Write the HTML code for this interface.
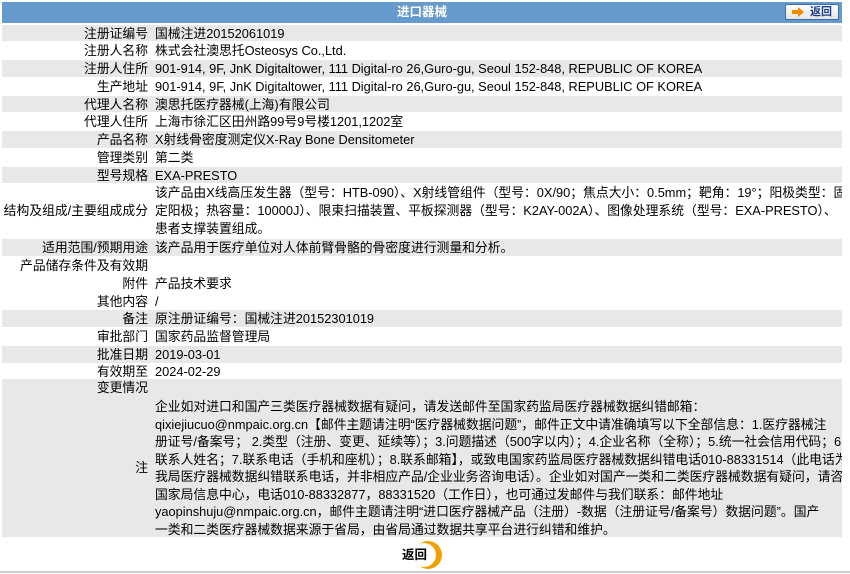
<!DOCTYPE html>
<html><head><meta charset="utf-8"><style>
body{margin:0;width:850px;height:574px;background:#fff;font-family:"Liberation Sans","Noto Sans CJK SC",sans-serif;font-size:12.8px;color:#000;position:relative;overflow:hidden}
.hd{position:absolute;left:2px;top:2px;width:840px;height:21px;background:#6699cc;color:#fff;font-weight:bold;text-align:center;line-height:21px;font-size:12.5px}
.r{position:absolute;left:2px;width:840px;border-top:1px solid #fff;box-sizing:border-box;white-space:nowrap;overflow:hidden}
.g{background:#e8e8e8}
.l{position:absolute;left:0;width:146px;text-align:right}
.v{position:absolute;left:153px}
.btn{position:absolute;left:785px;top:4px;width:54px;height:16px;border:1px solid #3a6ea5;border-radius:2px;background:linear-gradient(#fff,#e4e4e4);box-sizing:border-box;font-weight:bold;color:#1b3d8a;font-size:11px;line-height:14px}
</style></head><body>
<div class="hd">进口器械</div>
<div class="btn"><span style="position:absolute;left:6px;top:2px;width:0;height:0;"><svg width="12" height="10" viewBox="0 0 12 10"><path d="M0 3h6V0l6 5-6 5V7H0z" fill="#f08a00"/></svg></span><span style="position:absolute;left:24px;top:0">返回</span></div>
<div class="r g" style="top:23.5px;height:17.75px;line-height:17px"><span class="l">注册证编号</span><span class="v">国械注进20152061019</span></div>
<div class="r" style="top:41.25px;height:17.75px;line-height:17px"><span class="l">注册人名称</span><span class="v">株式会社澳思托Osteosys Co.,Ltd.</span></div>
<div class="r g" style="top:59px;height:17.75px;line-height:17px"><span class="l">注册人住所</span><span class="v">901-914, 9F, JnK Digitaltower, 111 Digital-ro 26,Guro-gu, Seoul 152-848, REPUBLIC OF KOREA</span></div>
<div class="r" style="top:76.75px;height:17.75px;line-height:17px"><span class="l">生产地址</span><span class="v">901-914, 9F, JnK Digitaltower, 111 Digital-ro 26,Guro-gu, Seoul 152-848, REPUBLIC OF KOREA</span></div>
<div class="r g" style="top:94.5px;height:17.75px;line-height:17px"><span class="l">代理人名称</span><span class="v">澳思托医疗器械(上海)有限公司</span></div>
<div class="r" style="top:112.25px;height:17.75px;line-height:17px"><span class="l">代理人住所</span><span class="v">上海市徐汇区田州路99号9号楼1201,1202室</span></div>
<div class="r g" style="top:130px;height:17.75px;line-height:17px"><span class="l">产品名称</span><span class="v">X射线骨密度测定仪X-Ray Bone Densitometer</span></div>
<div class="r" style="top:147.75px;height:17.75px;line-height:17px"><span class="l">管理类别</span><span class="v">第二类</span></div>
<div class="r g" style="top:165.5px;height:17.75px;line-height:17px"><span class="l">型号规格</span><span class="v">EXA-PRESTO</span></div>
<div class="r" style="top:183.25px;height:55px;line-height:18px"><span class="l" style="top:18px">结构及组成/主要组成成分</span><span class="v" style="top:0">该产品由X线高压发生器（型号：HTB-090）、X射线管组件（型号：0X/90；焦点大小：0.5mm；靶角：19°；阳极类型：固<br>定阳极；热容量：10000J）、限束扫描装置、平板探测器（型号：K2AY-002A）、图像处理系统（型号：EXA-PRESTO）、<br>患者支撑装置组成。</span></div>
<div class="r g" style="top:238.25px;height:17.75px;line-height:17px"><span class="l">适用范围/预期用途</span><span class="v">该产品用于医疗单位对人体前臂骨骼的骨密度进行测量和分析。</span></div>
<div class="r" style="top:256px;height:17.75px;line-height:17px"><span class="l">产品储存条件及有效期</span><span class="v"></span></div>
<div class="r" style="top:273.75px;height:17.75px;line-height:17px"><span class="l">附件</span><span class="v">产品技术要求</span></div>
<div class="r" style="top:291.5px;height:17.75px;line-height:17px"><span class="l">其他内容</span><span class="v">/</span></div>
<div class="r g" style="top:309.25px;height:17.75px;line-height:17px"><span class="l">备注</span><span class="v">原注册证编号：国械注进20152301019</span></div>
<div class="r" style="top:327px;height:17.75px;line-height:17px"><span class="l">审批部门</span><span class="v">国家药品监督管理局</span></div>
<div class="r g" style="top:344.75px;height:17.75px;line-height:17px"><span class="l">批准日期</span><span class="v">2019-03-01</span></div>
<div class="r" style="top:362.5px;height:16px;line-height:15px"><span class="l">有效期至</span><span class="v">2024-02-29</span></div>
<div class="r g" style="top:378px;height:159px;line-height:17.5px">
<span class="l" style="top:0">变更情况</span>
<span class="l" style="top:80px">注</span>
<span class="v" style="top:19px">企业如对进口和国产三类医疗器械数据有疑问，请发送邮件至国家药监局医疗器械数据纠错邮箱：<br>qixiejiucuo@nmpaic.org.cn【邮件主题请注明“医疗器械数据问题”，邮件正文中请准确填写以下全部信息：1.医疗器械注<br>册证号/备案号； 2.类型（注册、变更、延续等）；3.问题描述（500字以内）；4.企业名称（全称）；5.统一社会信用代码；6.<br>联系人姓名；7.联系电话（手机和座机）；8.联系邮箱】，或致电国家药监局医疗器械数据纠错电话010-88331514（此电话为<br>我局医疗器械数据纠错联系电话，并非相应产品/企业业务咨询电话）。企业如对国产一类和二类医疗器械数据有疑问，请咨询<br>国家局信息中心，电话010-88332877，88331520（工作日），也可通过发邮件与我们联系：邮件地址<br>yaopinshuju@nmpaic.org.cn，邮件主题请注明“进口医疗器械产品（注册）-数据（注册证号/备案号）数据问题”。国产<br>一类和二类医疗器械数据来源于省局，由省局通过数据共享平台进行纠错和维护。</span>
</div>
<svg style="position:absolute;left:410px;top:540px" width="36" height="30" viewBox="0 0 36 30"><circle cx="18" cy="15" r="14" fill="#f0a000"/><circle cx="14" cy="15" r="12" fill="#fff"/></svg>
<div style="position:absolute;left:402px;top:547px;font-weight:bold;font-size:12.5px;line-height:16px">返回</div>
<div style="position:absolute;left:0;top:571px;width:850px;height:2px;background:#ccc"></div>
</body></html>
